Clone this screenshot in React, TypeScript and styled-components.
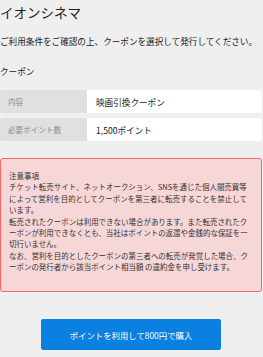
import styled, { createGlobalStyle } from 'styled-components'

const GlobalStyle = createGlobalStyle`
  html, body {
    margin: 0;
    padding: 0;
    background: #efefef;
  }
  body {
    font-family: "Noto Sans CJK JP", "Noto Sans", sans-serif;
    color: #222;
  }
`

const rows = [
  { label: '内容', value: '映画引換クーポン' },
  { label: '必要ポイント数', value: '1,500ポイント' },
]

const App = () => {
  return (
    <Page>
      <GlobalStyle />
      <Title>イオンシネマ</Title>
      <Lead>ご利用条件をご確認の上、クーポンを選択して発行してください。</Lead>
      <SectionLabel>クーポン</SectionLabel>
      <Table>
        {rows.map((r) => (
          <Row key={r.label}>
            <Cell $head>{r.label}</Cell>
            <Cell>{r.value}</Cell>
          </Row>
        ))}
      </Table>
      <Notice>
        <p>注意事項</p>
        <p>チケット転売サイト、ネットオークション、SNSを通じた個人間売買等によって営利を目的としてクーポンを第三者に転売することを禁止しています。</p>
        <p>転売されたクーポンは利用できない場合があります。また転売されたクーポンが利用できなくとも、当社はポイントの返還や金銭的な保証を一切行いません。</p>
        <p>なお、営利を目的としたクーポンの第三者への転売が発覚した場合、クーポンの発行者から該当ポイント相当額 の違約金を申し受けます。</p>
      </Notice>
      <Actions>
        <BuyButton type="button">ポイントを利用して800円で購入</BuyButton>
      </Actions>
    </Page>
  )
}

const Page = styled.div`
  width: 262px;
  display: flex;
  flex-direction: column;
`

const Title = styled.h1`
  margin: 0;
  padding-top: 2px;
  font-size: 13.5px;
  line-height: 20px;
  font-weight: 400;
  color: #222;
`

const Lead = styled.p`
  margin: 12px 0 0;
  font-size: 8.6px;
  line-height: 14px;
  white-space: nowrap;
`

const SectionLabel = styled.p`
  margin: 16px 0 0;
  font-size: 8.6px;
  line-height: 14px;
`

const Table = styled.div`
  margin-top: 12px;
  display: flex;
  flex-direction: column;
  gap: 5px;
`

const Row = styled.div`
  display: grid;
  grid-template-columns: 87px 1fr;
  height: 23px;
  border-radius: 3px;
  overflow: hidden;
`

const Cell = styled.div<{ $head?: boolean }>`
  display: flex;
  align-items: center;
  padding-left: ${(p) => (p.$head ? '8px' : '9px')};
  background: ${(p) => (p.$head ? '#e0e0e0' : '#ffffff')};
  color: ${(p) => (p.$head ? '#8a8a8a' : '#222')};
  font-size: ${(p) => (p.$head ? '7.6px' : '8.6px')};
`

const Notice = styled.div`
  margin-top: 17px;
  box-sizing: border-box;
  height: 134px;
  padding: 11px 8px 0 8px;
  background: #f6d6d6;
  border: 1px solid #f06a6a;
  border-radius: 3px;
  color: #333;
  font-size: 7.47px;
  line-height: 11.4px;

  p {
    margin: 0;
  }
`

const Actions = styled.div`
  display: flex;
  justify-content: center;
  margin-top: 27px;
`

const BuyButton = styled.button`
  width: 180px;
  height: 31px;
  border: none;
  border-radius: 2px;
  background: #0a80e0;
  color: #fff;
  font-family: inherit;
  font-size: 8.4px;
  cursor: pointer;
`

export default App
